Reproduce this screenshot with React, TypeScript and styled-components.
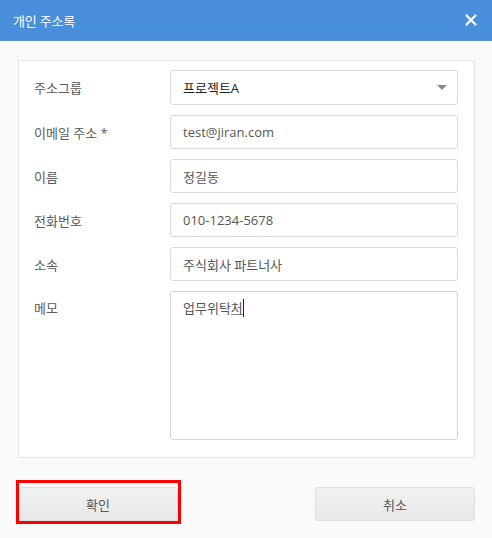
import React from "react";
import styled, { createGlobalStyle } from "styled-components";

const GlobalStyle = createGlobalStyle`
  html, body {
    margin: 0;
    padding: 0;
    background: #fafafa;
  }
  body {
    font-family: "Open Sans", "Noto Sans CJK KR", sans-serif;
    font-size: 13px;
    color: #555;
  }
  * { box-sizing: border-box; }
`;

const Dialog = styled.div`
  width: 492px;
  height: 538px;
  display: flex;
  flex-direction: column;
  background: #fafafa;
`;

const Header = styled.div`
  height: 41px;
  flex: none;
  display: flex;
  align-items: center;
  justify-content: space-between;
  padding: 0 15px 0 13px;
  background: #4a8fdc;
  border-bottom: 1px solid #5b8fc8;
  color: #fff;
  font-size: 13px;
`;

const Title = styled.span`
  letter-spacing: -0.2px;
`;

const CloseButton = styled.button`
  border: 0;
  background: none;
  padding: 0;
  width: 12px;
  height: 12px;
  display: flex;
  cursor: pointer;
`;

const Body = styled.div`
  flex: 1;
  padding: 19px 17px 16px 18px;
  display: flex;
  flex-direction: column;
`;

const Panel = styled.div`
  background: #fff;
  border: 1px solid #e6e6e6;
  padding: 9px 16px 17px 15px;
  display: grid;
  grid-template-columns: 136px 1fr;
  row-gap: 10px;
`;

const Label = styled.label<{ $top?: boolean }>`
  display: flex;
  align-items: ${(p) => (p.$top ? "flex-start" : "center")};
  padding-top: ${(p) => (p.$top ? "7px" : "0")};
  color: #5a5a5a;
  font-size: 13px;
`;

const fieldBase = `
  height: 34px;
  border: 1px solid #dcdcdc;
  border-radius: 3px;
  background: #fff;
  padding: 0 12px;
  font-family: "Open Sans", "Noto Sans CJK KR", sans-serif;
  font-size: 13px;
  color: #555;
  display: flex;
  align-items: center;
`;

const Select = styled.div`
  ${fieldBase}
  height: 35px;
  justify-content: space-between;
  color: #222;
  padding-right: 10px;
`;

const Caret = styled.span`
  width: 0;
  height: 0;
  border-left: 5px solid transparent;
  border-right: 5px solid transparent;
  border-top: 5px solid #888;
`;

const Input = styled.input`
  ${fieldBase}
  width: 100%;
  outline: none;
`;

const Memo = styled.div`
  ${fieldBase}
  height: 149px;
  align-items: flex-start;
  padding-top: 7px;
  border-color: #d4d4d4;
  line-height: 18px;
`;

const Composing = styled.span`
  text-decoration: underline;
  text-decoration-color: #888;
  border-right: 1px solid #222;
`;

const Footer = styled.div`
  margin-top: 29px;
  display: flex;
  justify-content: space-between;
`;

const Highlight = styled.div`
  position: relative;
`;

const Outline = styled.div`
  position: absolute;
  left: -2px;
  top: -7px;
  right: -3px;
  bottom: -3px;
  border: 3px solid #f00;
  pointer-events: none;
`;

const Button = styled.button`
  width: 160px;
  height: 34px;
  border: 1px solid #dedede;
  border-radius: 3px;
  background: linear-gradient(#f1f1f1, #e8e8e8);
  font-family: "Open Sans", "Noto Sans CJK KR", sans-serif;
  font-size: 13px;
  color: #555;
  cursor: pointer;
`;

const fields = [
  { label: "이메일 주소 *", value: "test@jiran.com" },
  { label: "이름", value: "정길동" },
  { label: "전화번호", value: "010-1234-5678" },
  { label: "소속", value: "주식회사 파트너사" },
];

export default function App() {
  return (
    <Dialog>
      <GlobalStyle />
      <Header>
        <Title>개인 주소록</Title>
        <CloseButton aria-label="닫기">
          <svg width="12" height="12" viewBox="0 0 12 12">
            <path d="M1.5 1.5 L10.5 10.5 M10.5 1.5 L1.5 10.5" stroke="#fff" strokeWidth="2.2" strokeLinecap="round" />
          </svg>
        </CloseButton>
      </Header>
      <Body>
        <Panel>
          <Label>주소그룹</Label>
          <Select>
            <span>프로젝트A</span>
            <Caret />
          </Select>
          {fields.map((f) => (
            <React.Fragment key={f.label}>
              <Label>{f.label}</Label>
              <Input defaultValue={f.value} />
            </React.Fragment>
          ))}
          <Label $top>메모</Label>
          <Memo>
            <span>
              업무위탁<Composing>처</Composing>
            </span>
          </Memo>
        </Panel>
        <Footer>
          <Highlight>
            <Button>확인</Button>
            <Outline />
          </Highlight>
          <Button>취소</Button>
        </Footer>
      </Body>
    </Dialog>
  );
}
